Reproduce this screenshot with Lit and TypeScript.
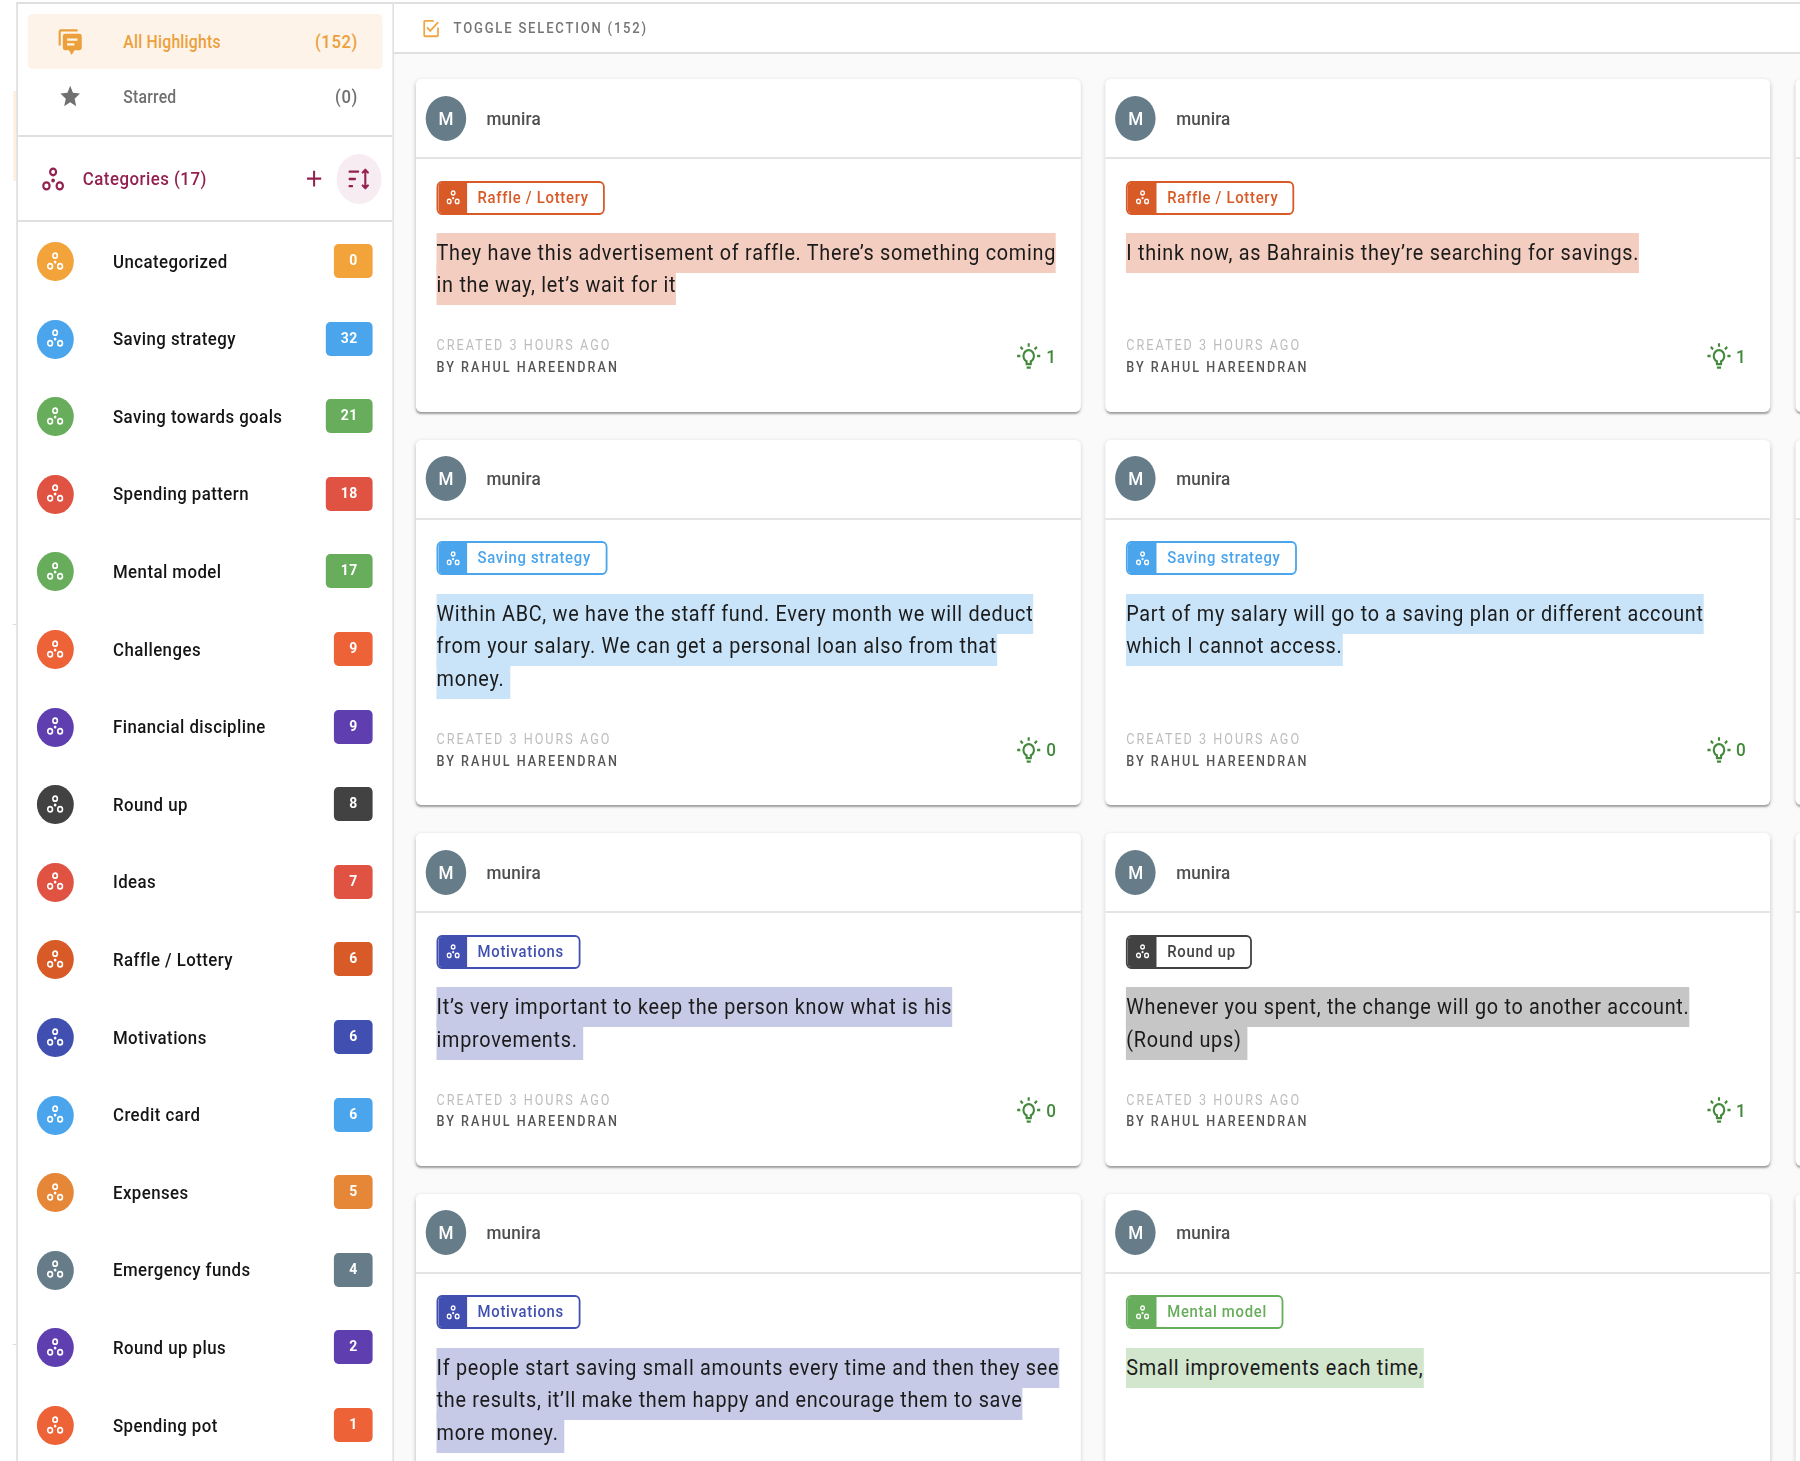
import { LitElement, html, css, svg, nothing } from "lit";
import { customElement, property } from "lit/decorators.js";

const clusterShape = svg`<g fill="none" stroke="currentColor" stroke-width="2.4"><circle cx="12" cy="4.9" r="3.3"/><circle cx="4.6" cy="18.900" r="3.500"/><circle cx="19.400" cy="18.900" r="3.500"/></g><circle cx="12" cy="13.400" r="2" fill="currentColor"/>`;
const cluster = html`<svg class="cluster" viewBox="0 0 24 24">${clusterShape}</svg>`;
const icon = (cls: string, d: string) => html`<svg class=${cls} viewBox="0 0 24 24"><path fill="currentColor" fill-rule="evenodd" d=${d}></path></svg>`;

const COMMENTS = "M3 15H1V3a2 2 0 0 1 2-2h16v2H3zM7 5h14a2 2 0 0 1 2 2v10a2 2 0 0 1-2 2h-5l-2.6 4.2L10.800 19H7a2 2 0 0 1-2-2V7a2 2 0 0 1 2-2zM9 9v2h10V9zM9 13v2h7v-2z";
const STAR = "M12 17.27 18.18 21l-1.64-7.03L22 9.24l-7.19-.62L12 2 9.19 8.62 2 9.24l5.45 4.73L5.82 21z";
const CHECK = "M19 19H5V5h10V3H5a2 2 0 0 0-2 2v14a2 2 0 0 0 2 2h14a2 2 0 0 0 2-2v-8h-2zM7.91 10.08 6.5 11.5 11 16 21 6l-1.41-1.42L11 13.17z";
const BULB = "M20,11H23V13H20V11M1,11H4V13H1V11M13,1V4H11V1H13M4.92,3.5L7.05,5.64L5.63,7.05L3.5,4.93L4.92,3.5M16.95,5.63L19.07,3.5L20.5,4.93L18.37,7.05L16.95,5.63M12,6A6,6 0 0,1 18,12C18,14.22 16.79,16.16 15,17.2V19A1,1 0 0,1 14,20H10A1,1 0 0,1 9,19V17.2C7.21,16.16 6,14.22 6,12A6,6 0 0,1 12,6M14,21V22A1,1 0 0,1 13,23H11A1,1 0 0,1 10,22V21H14M11,18H13V15.87C14.73,15.43 16,13.86 16,12A4,4 0 0,0 12,8A4,4 0 0,0 8,12C8,13.86 9.27,15.43 11,15.87V18Z";
const PLUS = "M19 13h-6v6h-2v-6H5v-2h6V5h2v6h6z";
const sortIcon = html`<svg class="sort" viewBox="0 0 24 24"><path d="M1.200 4.700H11M1.200 12H7.500M1.200 19.200H4.200M18.900 4V20M16 5.500 18.900 2.800 21.800 5.500M16 18.500 18.900 21.200 21.800 18.500" fill="none" stroke="currentColor" stroke-width="2.3" stroke-linecap="round" stroke-linejoin="round"></path></svg>`;

const categories: [string, number, string][] = [
  ["Uncategorized", 0, "#f2a33a"],
  ["Saving strategy", 32, "#4aa5ec"],
  ["Saving towards goals", 21, "#67ad5b"],
  ["Spending pattern", 18, "#e05242"],
  ["Mental model", 17, "#67ad5b"],
  ["Challenges", 9, "#ed6237"],
  ["Financial discipline", 9, "#5f3fb0"],
  ["Round up", 8, "#424242"],
  ["Ideas", 7, "#e05242"],
  ["Raffle / Lottery", 6, "#d75a27"],
  ["Motivations", 6, "#4150b0"],
  ["Credit card", 6, "#4aa5ec"],
  ["Expenses", 5, "#e68637"],
  ["Emergency funds", 4, "#667d89"],
  ["Round up plus", 2, "#5f3fb0"],
  ["Spending pot", 1, "#ed6237"],
];

interface Note { tag: string; color: string; tint: string; lines: string[]; ideas?: number }
const raffle = { tag: "Raffle / Lottery", color: "#d75a27", tint: "#f3cdbf" };
const saving = { tag: "Saving strategy", color: "#4aa5ec", tint: "#c9e4f9" };
const motive = { tag: "Motivations", color: "#4150b0", tint: "#c6cae7" };
const round = { tag: "Round up", color: "#424242", tint: "#c6c6c6" };
const mental = { tag: "Mental model", color: "#67ad5b", tint: "#d1e6cd" };

const rows: Note[][] = [
  [
    { ...raffle, lines: ["They have this advertisement of raffle. There’s something coming", "in the way, let’s wait for it"], ideas: 1 },
    { ...raffle, lines: ["I think now, as Bahrainis they’re searching for savings."], ideas: 1 },
  ],
  [
    { ...saving, lines: ["Within ABC, we have the staff fund. Every month we will deduct", "from your salary. We can get a personal loan also from that", "money. "], ideas: 0 },
    { ...saving, lines: ["Part of my salary will go to a saving plan or different account", "which I cannot access."], ideas: 0 },
  ],
  [
    { ...motive, lines: ["It’s very important to keep the person know what is his", "improvements. "], ideas: 0 },
    { ...round, lines: ["Whenever you spent, the change will go to another account.", "(Round ups) "], ideas: 1 },
  ],
  [
    { ...motive, lines: ["If people start saving small amounts every time and then they see", "the results, it’ll make them happy and encourage them to save", "more money. "] },
    { ...mental, lines: ["Small improvements each time,"] },
  ],
];

@customElement("highlight-card")
class HighlightCard extends LitElement {
  @property({ attribute: false }) note?: Note;
  static styles = css`
    :host { display: flex; flex-direction: column; background: #fff; border-radius: 6px; box-shadow: 0 3px 2px -1px rgba(0,0,0,.3), 0 1px 5px rgba(0,0,0,.14); min-width: 0; }
    .head { display: flex; align-items: center; gap: 22.5px; height: 80px; padding-left: 11px; border-bottom: 2px solid #e4e4e4; box-sizing: border-box; flex: none; }
    .avatar { width: 45px; height: 45px; border-radius: 50%; background: #667d89; color: #fff; display: grid; place-items: center; font: 500 19px/1 Roboto, sans-serif; }
    .name { font-size: 19px; font-weight: 500; letter-spacing: .2px; color: #4f4f4f; }
    .body { padding: 21.5px 23px 32.5px 23px; display: flex; flex-direction: column; flex: 1; }
    .tag { display: inline-flex; align-self: flex-start; height: 34px; box-sizing: border-box; border: 2px solid var(--c); border-radius: 6px; overflow: hidden; color: var(--c); background: #fff; }
    .tag-icon { width: 32px; background: var(--c); color: #fff; display: grid; place-items: center; }
    .cluster { width: 15px; height: 14.5px; }
    .tag-text { font-size: 16.5px; font-weight: 500; letter-spacing: .8px; line-height: 30px; padding: 0 16px 0 11.5px; white-space: nowrap; }
    .quote { margin-top: 22.5px; font-size: 22px; line-height: 32.4px; letter-spacing: .8px; color: #1b1b1b; white-space: pre; }
    .mark { background: var(--t); padding: 7px 0 8px; }
    .line { display: block; }
    .foot { margin-top: auto; display: flex; justify-content: space-between; align-items: center; }
    .meta { font-size: 14px; line-height: 21.8px; letter-spacing: 2.25px; font-weight: 500; color: #555; }
    .date { color: #bdbdbd; font-weight: 400; }
    .ideas { display: flex; align-items: center; gap: 5px; margin: 0 4.5px 2px 0; color: #43893c; font-size: 19px; font-weight: 500; }
    .bulb { width: 28px; height: 28px; }
  `;
  render() {
    const n = this.note;
    if (!n) return html`<div class="head"></div>`;
    return html`
      <div class="head"><div class="avatar">M</div><div class="name">munira</div></div>
      <div class="body" style="--c:${n.color};--t:${n.tint}">
        <div class="tag"><span class="tag-icon">${cluster}</span><span class="tag-text">${n.tag}</span></div>
        <div class="quote">${n.lines.map((l) => html`<span class="line"><span class="mark">${l}</span></span>`)}</div>
        ${n.ideas === undefined ? nothing : html`<div class="foot">
          <div class="meta"><div class="date">CREATED 3 HOURS AGO</div><div>BY RAHUL HAREENDRAN</div></div>
          <div class="ideas">${icon("bulb", BULB)}<span>${n.ideas}</span></div>
        </div>`}
      </div>`;
  }
}

@customElement("app-root")
class AppRoot extends LitElement {
  static styles = css`
    :host { display: block; width: 1800px; height: 1461px; overflow: hidden; background: #fff; font-family: Roboto, sans-serif; }
    .stage { width: 2000px; height: 1461px; transform: scaleX(.9); transform-origin: 0 0; display: flex; padding-top: 2px; box-sizing: border-box; }
    .gutter { width: 18px; flex: none; display: flex; flex-direction: column; align-items: flex-end; }
    .peach { width: 3px; height: 90px; margin-top: 89px; background: #fdeedd; }
    .tick { width: 4px; height: 1px; background: #ddd; margin-top: 443px; }
    .tick + .tick { margin-top: 719px; }
    .side { width: 419.5px; box-sizing: border-box; flex: none; border: 2px solid #e0e0e0; border-bottom: 0; display: flex; flex-direction: column; }
    .nav { padding: 10px 11px 0 10.500px; height: 133px; box-sizing: border-box; border-bottom: 2px solid #e0e0e0; flex: none; }
    .item { height: 55px; display: grid; grid-template-columns: 29px 1fr auto; align-items: center; padding: 0 27px 0 33.500px; column-gap: 44px; font-size: 17.500px; letter-spacing: .25px; font-weight: 500; color: #707070; border-radius: 5px; }
    .item.on { background: #fef3e8; color: #eba03c; }
    .icon { width: 28px; height: 28px; }
    .star { width: 26px; height: 27px; margin-left: 1px; }
    .num { font-size: 18.500px; letter-spacing: .6px; }
    .cats { height: 85px; box-sizing: border-box; border-bottom: 2px solid #e0e0e0; display: flex; align-items: center; padding: 0 12px 0 25.500px; color: #93204f; flex: none; }
    .cats .cluster { width: 26px; height: 24px; }
    .title { font-size: 18.700px; font-weight: 500; letter-spacing: .55px; margin-left: 20.500px; flex: 1; }
    .plus { width: 28px; height: 27px; margin-right: 10.500px; }
    .round { width: 50px; height: 50px; border-radius: 50%; background: #f7ecf1; display: grid; place-items: center; }
    .sort { width: 24px; height: 24px; }
    .list { display: flex; flex-direction: column; padding-top: .8px; }
    .row { height: 77.600px; display: flex; align-items: center; padding: 0 21.500px 0 21px; flex: none; }
    .dot { width: 40.500px; height: 39px; border-radius: 50%; color: #fff; display: grid; place-items: center; background: var(--c); }
    .dot .cluster { width: 18.500px; height: 18px; margin-bottom: 2px; }
    .label { flex: 1; margin-left: 44px; font-size: 18.700px; letter-spacing: .5px; font-weight: 500; color: #151515; }
    .badge { background: var(--c); color: #fff; height: 34px; line-height: 32px; border-radius: 5px; padding: 0 16.500px 0 17px; font-size: 15.500px; letter-spacing: .5px; font-weight: 700; margin-bottom: 1px; }
    .main { flex: 1; min-width: 0; display: flex; flex-direction: column; background: #fafafa; border-top: 2px solid #e0e0e0; }
    .bar { height: 50px; box-sizing: border-box; background: #fff; border-bottom: 2px solid #e0e0e0; display: flex; align-items: center; gap: 13.500px; padding-left: 29px; flex: none; color: #757575; font-size: 14.500px; font-weight: 500; letter-spacing: 2px; }
    .check { width: 24px; height: 23px; color: #f0a545; }
    .grid { display: grid; grid-template-columns: repeat(3, 738.700px); column-gap: 27.600px; row-gap: 28.300px; grid-template-rows: 332.500px 365px 332.500px 365px; padding: 25px 0 0 24.600px; overflow: hidden; flex: 1; }
  `;
  render() {
    return html`
      <div class="stage">
        <div class="gutter"><div class="peach"></div><div class="tick"></div><div class="tick"></div></div>
        <aside class="side">
          <nav class="nav">
            <div class="item on">${icon("icon", COMMENTS)}<span>All Highlights</span><span class="num">(152)</span></div>
            <div class="item">${icon("star", STAR)}<span>Starred</span><span class="num">(0)</span></div>
          </nav>
          <div class="cats">${cluster}<span class="title">Categories (17)</span>${icon("plus", PLUS)}<span class="round">${sortIcon}</span></div>
          <div class="list">
            ${categories.map(([name, n, c]) => html`<div class="row" style="--c:${c}"><span class="dot">${cluster}</span><span class="label">${name}</span><span class="badge">${n}</span></div>`)}
          </div>
        </aside>
        <main class="main">
          <div class="bar">${icon("check", CHECK)}<span>TOGGLE SELECTION (152)</span></div>
          <div class="grid">
            ${rows.map((r) => html`${r.map((n) => html`<highlight-card .note=${n}></highlight-card>`)}<highlight-card></highlight-card>`)}
          </div>
        </main>
      </div>`;
  }
}
